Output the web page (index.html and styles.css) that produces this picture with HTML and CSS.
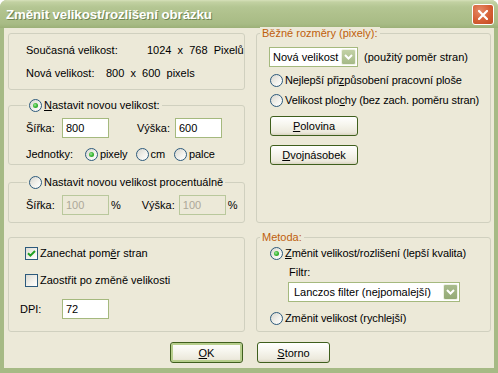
FILE: index.html
```html
<!DOCTYPE html>
<html lang="cs">
<head>
  <meta charset="UTF-8">
  <meta name="viewport" content="width=device-width, initial-scale=1.0">
  <title>Změnit velikost/rozlišení obrázku</title>
  <link rel="stylesheet" href="styles.css">
</head>
<body>
  <div class="window">
    <div class="titlebar">
      <span class="title">Změnit velikost/rozlišení obrázku</span>
      <span class="close">
        <svg width="10" height="10" viewBox="0 0 10 10"><path d="M1 1L9 9M9 1L1 9" stroke="#fff" stroke-width="2.2" stroke-linecap="square"/></svg>
      </span>
    </div>

    <div class="content">
      <div class="groups">
        <div class="stack">
          <div class="group info">
            <div class="info-row"><span class="info-label cur">Současná velikost:</span><span class="pre">1024  x  768  Pixelů</span></div>
            <div class="info-row next"><span class="info-label new">Nová velikost:</span><span class="pre">800  x  600  pixels</span></div>
          </div>

          <div class="group size">
            <div class="caption"><span class="radio checked"></span><span><u>N</u>astavit novou velikost:</span></div>
            <div class="field-row">
              <span class="lbl lbl-w">Šířka:</span><input class="box" type="text" value="800">
              <span class="lbl lbl-h">Výška:</span><input class="box" type="text" value="600">
            </div>
            <div class="units-row">
              <span class="lbl units">Jednotky:</span>
              <span class="opt"><span class="radio checked"></span><span>pixely</span></span>
              <span class="opt cm"><span class="radio"></span><span>cm</span></span>
              <span class="opt palce"><span class="radio"></span><span>palce</span></span>
            </div>
          </div>

          <div class="group percent">
            <div class="caption"><span class="radio"></span><span>Nastavit novou velikost procentuálně</span></div>
            <div class="field-row">
              <span class="lbl lbl-w">Šířka:</span><input class="box" type="text" value="100" disabled><span class="pct">%</span>
              <span class="lbl lbl-h2">Výška:</span><input class="box" type="text" value="100" disabled><span class="pct">%</span>
            </div>
          </div>
        </div>

        <div class="group presets">
          <div class="caption orange">Běžné rozměry (pixely):</div>
          <div class="preset-row">
            <div class="select small"><span class="select-text">Nová velikost</span><span class="arrow"><svg width="9" height="6" viewBox="0 0 9 6"><path d="M1 1L4.5 4.5L8 1" stroke="#fff" stroke-width="2" fill="none"/></svg></span></div>
            <span class="hint">(použitý poměr stran)</span>
          </div>
          <div class="opt line first"><span class="radio"></span><span>Nejlepší při<u>z</u>působení pracovní ploše</span></div>
          <div class="opt line"><span class="radio"></span><span>Velikost plo<u>c</u>hy (bez zach. poměru stran)</span></div>
          <button class="btn wide first-btn"><u>P</u>olovina</button>
          <button class="btn wide"><u>D</u>vojnásobek</button>
        </div>

        <div class="group options">
          <div class="check-row"><span class="check checked"><svg width="9" height="9" viewBox="0 0 9 9"><path d="M1 4.2L3.4 6.6L8 2" stroke="#21a121" stroke-width="2" fill="none"/></svg></span><span>Zanechat pom<u>ě</u>r stran</span></div>
          <div class="check-row second"><span class="check"></span><span>Zaostřit po změně velikosti</span></div>
          <div class="dpi-row"><span class="lbl dpi">DPI:</span><input class="box" type="text" value="72"></div>
        </div>

        <div class="group method">
          <div class="caption orange">Metoda:</div>
          <div class="opt line m1"><span class="radio checked"></span><span><u>Z</u>měnit velikost/rozlišení (lepší kvalita)</span></div>
          <div class="filter-label">Filtr:</div>
          <div class="select wide-select"><span class="select-text">Lanczos filter (nejpomalejší)</span><span class="arrow dark"><svg width="9" height="6" viewBox="0 0 9 6"><path d="M1 1L4.5 4.5L8 1" stroke="#fff" stroke-width="2" fill="none"/></svg></span></div>
          <div class="opt line m2"><span class="radio"></span><span>Změnit velikost (rychlejší)</span></div>
        </div>
      </div>

      <div class="actions">
        <button class="btn main default"><u>O</u>K</button>
        <button class="btn main"><u>S</u>torno</button>
      </div>
    </div>
  </div>
</body>
</html>
```

FILE: styles.css
```css
/* XP olive dialog */
* {
  box-sizing: border-box;
}

html, body {
  margin: 0;
  padding: 0;
}

body {
  background-color: #ffffff;
  font-family: 'Liberation Sans', Arial, sans-serif;
  font-size: 11px;
  color: #000;
}

.window {
  width: 498px;
  height: 373px;
  display: flex;
  flex-direction: column;
  border-radius: 7px 7px 0 0;
  overflow: hidden;
  background: #a6ba85;
}

.titlebar {
  height: 28px;
  flex: none;
  display: flex;
  align-items: center;
  justify-content: space-between;
  padding: 1px 4px 0 6px;
  background: linear-gradient(#d6e0ba 0, #c2d1a2 2px, #b4c693 7px, #afc18c 50%, #a8bb85 85%, #9cb078 100%);
}

.title {
  color: #fff;
  font-weight: bold;
  font-size: 13.3px;
  letter-spacing: -0.1px;
  text-shadow: 1px 1px 0 #6f8550;
}

.close {
  width: 22px;
  height: 21px;
  border: 1px solid #fff;
  border-radius: 3px;
  display: flex;
  align-items: center;
  justify-content: center;
  background: radial-gradient(circle at 35% 30%, #e58a68 0, #d65f35 55%, #c04a22 100%);
}

.content {
  flex: 1;
  margin: 0 4px 5px 4px;
  background: #ece9d8;
  padding: 5px 3px 0 4px;
}

.groups {
  display: grid;
  grid-template-columns: 237px 235px;
  grid-template-rows: 190px 95px;
  column-gap: 11px;
  row-gap: 14px;
}

.stack {
  display: flex;
  flex-direction: column;
}

.group {
  position: relative;
  border: 1px solid #d0d0bf;
  border-radius: 3px;
}

.caption {
  position: absolute;
  top: -7px;
  left: 18px;
  height: 13px;
  line-height: 13px;
  padding: 0 2px;
  display: flex;
  align-items: center;
  gap: 2px;
  background: #ece9d8;
}

.caption.orange {
  left: 3px;
  color: #bf5f0c;
}

/* info box */
.info {
  height: 57px;
  padding: 10px 0 0 17px;
}

.info-row {
  display: flex;
  line-height: 13px;
}

.info-row.next {
  margin-top: 10px;
}

.info-label.cur {
  width: 121px;
}

.info-label.new {
  width: 80px;
}

.pre {
  white-space: pre;
}

/* size boxes */
.size {
  height: 60px;
  margin-top: 15px;
  padding: 12px 0 0 17px;
}

.percent {
  height: 41px;
  margin-top: 17px;
  padding: 12px 0 0 17px;
}

.field-row, .units-row, .dpi-row {
  display: flex;
  align-items: center;
}

.lbl {
  line-height: 13px;
}

.lbl-w {
  width: 36px;
}

.lbl-h {
  width: 38px;
  margin-left: 28px;
}

.lbl-h2 {
  width: 37px;
  margin-left: 21px;
}

.pct {
  margin-left: 2px;
}

.box {
  width: 47px;
  height: 20px;
  border: 1px solid #a5b97e;
  background: #fff;
  padding: 0 0 0 3px;
  margin: 0;
  font-family: inherit;
  font-size: 11px;
  color: #000;
  outline: none;
}

.box:disabled {
  background: #ece9d8;
  color: #aca899;
  border-color: #b9c89c;
}

.units-row {
  margin-top: 10px;
  height: 13px;
}

.units {
  width: 59px;
}

.opt {
  display: flex;
  align-items: center;
  gap: 2px;
  line-height: 13px;
  letter-spacing: -0.1px;
}

.opt.cm {
  margin-left: 8px;
}

.opt.palce {
  margin-left: 9px;
}

.radio {
  width: 13px;
  height: 13px;
  flex: none;
  border: 1px solid #2c5a7c;
  border-radius: 50%;
  background: linear-gradient(135deg, #d8d7cf 0, #f4f3ee 60%, #ffffff 100%);
  position: relative;
}

.radio.checked::after {
  content: '';
  position: absolute;
  left: 3px;
  top: 3px;
  width: 5px;
  height: 5px;
  border-radius: 50%;
  background: radial-gradient(circle at 40% 40%, #a6e6a3 0, #3dbb37 45%, #1f8e1c 100%);
}

.check {
  width: 13px;
  height: 13px;
  flex: none;
  border: 1px solid #2c5a7c;
  background: linear-gradient(135deg, #dcdbd3 0, #f4f3ee 60%, #ffffff 100%);
  display: flex;
  align-items: center;
  justify-content: center;
}

/* presets */
.presets {
  grid-row: 1;
  grid-column: 2;
  padding: 13px 0 0 12px;
}

.preset-row {
  display: flex;
  align-items: center;
  gap: 6px;
}

.select {
  height: 20px;
  border: 1px solid #a5b97e;
  background: #fff;
  display: flex;
  align-items: center;
  justify-content: space-between;
  padding: 0 1px 0 3px;
}

.select.small {
  width: 89px;
}

.arrow {
  width: 15px;
  height: 16px;
  border-radius: 2px;
  display: flex;
  align-items: center;
  justify-content: center;
  background: linear-gradient(#c3d2a6, #a5b987);
  border: 1px solid #eef2e4;
}

.arrow.dark {
  background: linear-gradient(#a9bb8c, #94a975);
}

.opt.line {
  margin-left: 1px;
  height: 13px;
}

.opt.line.first {
  margin-top: 7px;
}

.presets .opt.line + .opt.line {
  margin-top: 7px;
}

.btn {
  display: block;
  height: 20px;
  border: 1px solid #3f5f1d;
  border-radius: 3px;
  background: linear-gradient(#ffffff 0, #f7f6ef 40%, #ece9dc 85%, #d9d4c1 100%);
  font-family: inherit;
  font-size: 11px;
  color: #000;
  padding: 0;
}

.btn.wide {
  width: 88px;
  margin: 9px 0 0 1px;
}

/* options */
.options {
  grid-row: 2;
  grid-column: 1;
  padding: 9px 0 0 16px;
}

.check-row {
  display: flex;
  align-items: center;
  gap: 2px;
  line-height: 13px;
}

.check-row.second {
  margin-top: 14px;
}

.dpi-row {
  margin: 12px 0 0 -5px;
}

.dpi {
  width: 42px;
}

/* method */
.method {
  grid-row: 2;
  grid-column: 2;
  padding: 9px 0 0 12px;
}

.filter-label {
  margin: 6px 0 0 20px;
  line-height: 13px;
}

.select.wide-select {
  width: 172px;
  margin: 3px 0 0 19px;
  padding-left: 5px;
}

.opt.line.m2 {
  margin-top: 10px;
}

/* bottom buttons */
.actions {
  display: flex;
  justify-content: center;
  gap: 14px;
  margin-top: 10px;
  padding-left: 1px;
}

.btn.main {
  width: 73px;
  height: 21px;
}

.btn.default {
  box-shadow: inset 0 0 0 2px #b7ce8c;
}
```
